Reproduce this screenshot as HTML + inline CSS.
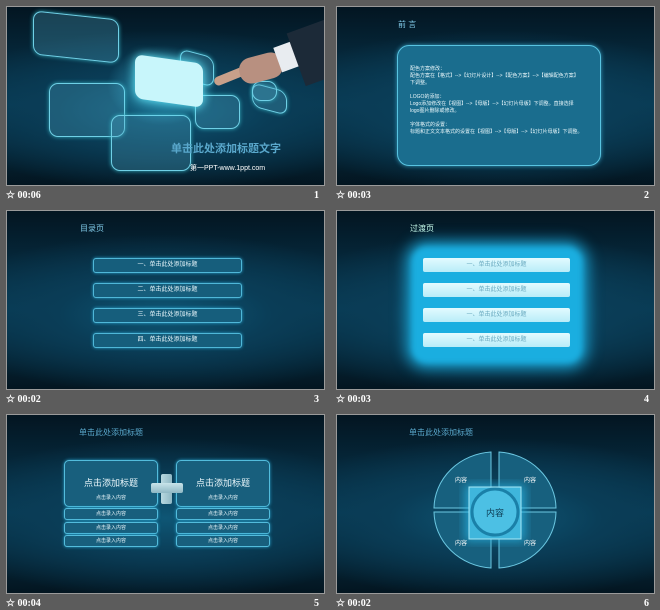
<!DOCTYPE html>
<html><head><meta charset="utf-8"><style>
*{margin:0;padding:0;box-sizing:border-box}
body{width:660px;height:610px;background:#5c5c5c;position:relative;overflow:hidden;font-family:"Liberation Sans","Noto Sans CJK SC",sans-serif}
.s{position:absolute;width:319px;height:180px;border:1px solid #9a9a9a;overflow:hidden;background:radial-gradient(ellipse 75% 45% at 50% 58%,#0e5675 0%,#0a3d57 45%,rgba(3,21,32,0) 100%),linear-gradient(#031521,#083a53 55%,#031520)}
.f{position:absolute;color:#fff;font-size:10px;font-weight:bold;font-family:"Liberation Serif",serif}
.a{position:absolute}
.t{position:absolute;color:#7fc8e6;font-size:8px}
.b3{position:absolute;left:86px;width:149px;height:15px;border:1px solid #4fb7d8;border-radius:3px;background:#165e7c;color:#e8f6fb;font-size:6px;text-align:center;line-height:13px;box-shadow:0 0 3px #2aa3cc}
.b4{position:absolute;left:86px;width:147px;height:14px;border-radius:2px;background:linear-gradient(#e2fbff,#b8ecf8);color:#6aaac0;font-size:6px;text-align:center;line-height:14px}
.bx{position:absolute;border:1px solid #53bcdc;border-radius:3px;background:#185f7d;color:#eaf7fb;font-size:5px;text-align:center;box-shadow:0 0 3px #2aa3cc}
.p1{position:absolute;border:1.5px solid #6fd0e6;border-radius:9px;background:rgba(80,170,200,.3);box-shadow:0 0 4px #3ab}
</style></head><body>

<!-- slide 1 -->
<div class="s" style="left:6px;top:6px">
 <div class="p1" style="left:26px;top:8px;width:86px;height:44px;transform:skewY(6deg)"></div>
 <div class="p1" style="left:42px;top:76px;width:76px;height:54px"></div>
 <div class="p1" style="left:104px;top:108px;width:80px;height:56px"></div>
 <div class="p1" style="left:173px;top:46px;width:34px;height:30px;transform:skewY(15deg)"></div>
 <div class="p1" style="left:188px;top:88px;width:45px;height:34px"></div>
 <div class="p1" style="left:245px;top:80px;width:35px;height:24px;transform:skewY(15deg)"></div>
 <div class="p1" style="left:245px;top:74px;width:25px;height:20px"></div>
 <div class="a" style="left:100px;top:38px;width:110px;height:80px;background:radial-gradient(closest-side,rgba(80,220,255,.6),rgba(80,220,255,0))"></div>
 <div class="a" style="left:128px;top:52px;width:68px;height:44px;border-radius:8px;background:#c8f6fb;box-shadow:0 0 10px #6ef;transform:skewY(8deg)"></div>
 <div class="a" style="left:205px;top:58px;width:70px;height:9px;border-radius:6px;background:#c8a08a;transform:rotate(-22deg)"></div>
 <div class="a" style="left:232px;top:48px;width:44px;height:26px;border-radius:12px;background:#b89080;transform:rotate(-15deg)"></div>
 <div class="a" style="left:270px;top:36px;width:24px;height:26px;background:#e8ecf0;transform:rotate(-20deg)"></div>
 <div class="a" style="left:288px;top:18px;width:40px;height:56px;background:#1c2a38;transform:rotate(-20deg)"></div>
 <div class="a" style="left:164px;top:133px;color:#5aa8cc;font-size:11px;font-weight:bold;white-space:nowrap">单击此处添加标题文字</div>
 <div class="a" style="left:183px;top:156px;color:#fff;font-size:7px;white-space:nowrap">第一PPT-www.1ppt.com</div>
</div>
<div class="f" style="left:6px;top:190px">☆ 00:06</div><div class="f" style="left:314px;top:190px">1</div>

<!-- slide 2 -->
<div class="s" style="left:336px;top:6px">
 <div class="t" style="left:61px;top:12px;font-size:8px">前 言</div>
 <div class="a" style="left:60px;top:38px;width:204px;height:121px;border:1.5px solid #58c3e0;border-radius:12px;background:#1a6d8e;box-shadow:0 0 5px #39b;color:#e8f6fa;font-size:5px;line-height:7px;padding:20px 12px">
  配色方案修改：<br>配色方案在【格式】--&gt;【幻灯片设计】--&gt;【配色方案】--&gt;【编辑配色方案】<br>下调整。<br><br>LOGO的添加：<br>Logo添加修改在【视图】--&gt;【母版】--&gt;【幻灯片母版】下调整。直接选择<br>logo图片删除或修改。<br><br>字体格式的设置：<br>标题和正文文本格式的设置在【视图】--&gt;【母版】--&gt;【幻灯片母版】下调整。
 </div>
</div>
<div class="f" style="left:336px;top:190px">☆ 00:03</div><div class="f" style="left:644px;top:190px">2</div>

<!-- slide 3 -->
<div class="s" style="left:6px;top:210px">
 <div class="t" style="left:73px;top:12px">目录页</div>
 <div class="b3" style="top:47px">一、单击此处添加标题</div>
 <div class="b3" style="top:72px">二、单击此处添加标题</div>
 <div class="b3" style="top:97px">三、单击此处添加标题</div>
 <div class="b3" style="top:122px">四、单击此处添加标题</div>
</div>
<div class="f" style="left:6px;top:394px">☆ 00:02</div><div class="f" style="left:314px;top:394px">3</div>

<!-- slide 4 -->
<div class="s" style="left:336px;top:210px">
 <div class="t" style="left:73px;top:12px;color:#cfe">过渡页</div>
 <div class="a" style="left:74px;top:35px;width:172px;height:118px;border-radius:16px;background:#1aaee0;box-shadow:0 0 12px 6px rgba(26,168,216,.8);filter:blur(3px)"></div>
 <div class="b4" style="top:47px">一、单击此处添加标题</div>
 <div class="b4" style="top:72px">一、单击此处添加标题</div>
 <div class="b4" style="top:97px">一、单击此处添加标题</div>
 <div class="b4" style="top:122px">一、单击此处添加标题</div>
</div>
<div class="f" style="left:336px;top:394px">☆ 00:03</div><div class="f" style="left:644px;top:394px">4</div>

<!-- slide 5 -->
<div class="s" style="left:6px;top:414px">
 <div class="t" style="left:72px;top:12px;color:#5aa8cc">单击此处添加标题</div>
 <div class="bx" style="left:57px;top:45px;width:94px;height:47px;border-radius:5px;font-size:5px;padding-top:15px"><div style="font-size:9px;margin-bottom:5px">点击添加标题</div>点击录入内容</div>
 <div class="bx" style="left:169px;top:45px;width:94px;height:47px;border-radius:5px;font-size:5px;padding-top:15px"><div style="font-size:9px;margin-bottom:5px">点击添加标题</div>点击录入内容</div>
 <div class="bx" style="left:57px;top:93px;width:94px;height:12px;line-height:10px">点击录入内容</div>
 <div class="bx" style="left:57px;top:107px;width:94px;height:12px;line-height:10px">点击录入内容</div>
 <div class="bx" style="left:57px;top:120px;width:94px;height:12px;line-height:10px">点击录入内容</div>
 <div class="bx" style="left:169px;top:93px;width:94px;height:12px;line-height:10px">点击录入内容</div>
 <div class="bx" style="left:169px;top:107px;width:94px;height:12px;line-height:10px">点击录入内容</div>
 <div class="bx" style="left:169px;top:120px;width:94px;height:12px;line-height:10px">点击录入内容</div>
 <div class="a" style="left:154px;top:59px;width:11px;height:30px;border-radius:2px;background:linear-gradient(90deg,#b8d8e0,#8fb8c4)"></div>
 <div class="a" style="left:144px;top:68px;width:32px;height:10px;border-radius:2px;background:linear-gradient(#c8e4ea,#8fb8c4)"></div>
</div>
<div class="f" style="left:6px;top:598px">☆ 00:04</div><div class="f" style="left:314px;top:598px">5</div>

<!-- slide 6 -->
<div class="s" style="left:336px;top:414px">
 <div class="t" style="left:72px;top:12px;color:#5aa8cc">单击此处添加标题</div>
 <svg class="a" style="left:0;top:0" width="319" height="180">
  <defs><filter id="g"><feGaussianBlur stdDeviation="5"/></filter></defs>
  <g fill="#17607e" stroke="#6cc8e2" stroke-width="1">
   <path d="M154 37 A61 57 0 0 0 97 93 L154 93 Z"/>
   <path d="M162 37 A61 57 0 0 1 219 93 L162 93 Z"/>
   <path d="M154 153 A61 57 0 0 1 97 97 L154 97 Z"/>
   <path d="M162 153 A61 57 0 0 0 219 97 L162 97 Z"/>
  </g>
  <rect x="128" y="70" width="60" height="56" fill="#28b8e8" opacity=".7" filter="url(#g)"/>
  <rect x="132" y="72" width="52" height="52" fill="#3fb6dc" stroke="#a8e8f6"/>
  <circle cx="158" cy="97" r="23" fill="#4cc0e4" stroke="#1a80a8" stroke-width="3"/>
  <text x="158" y="101" font-size="9" fill="#0d3d55" text-anchor="middle" font-family="Liberation Sans,Noto Sans CJK SC,sans-serif">内容</text>
  <g font-size="6" fill="#fff" text-anchor="middle" font-family="Liberation Sans,Noto Sans CJK SC,sans-serif">
   <text x="124" y="67">内容</text><text x="193" y="67">内容</text>
   <text x="124" y="130">内容</text><text x="193" y="130">内容</text>
  </g>
 </svg>
</div>
<div class="f" style="left:336px;top:598px">☆ 00:02</div><div class="f" style="left:644px;top:598px">6</div>

</body></html>
